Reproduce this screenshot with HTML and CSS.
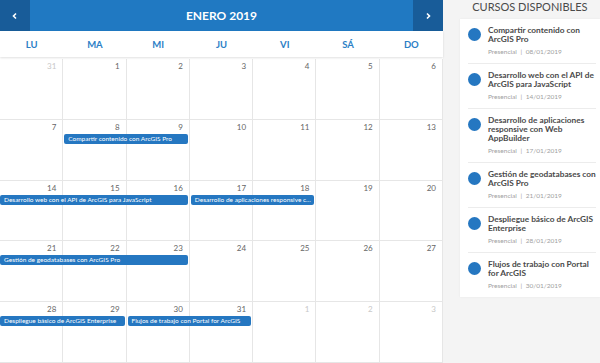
FILE: index.html
```html
<!DOCTYPE html>
<html lang="es">
<head>
    <meta charset="UTF-8">
    <meta name="viewport" content="width=device-width, initial-scale=1.0">
    <title>Calendario de cursos</title>
    <link rel="stylesheet" href="styles.css">
</head>
<body>

<div class="page">
    <div class="calendar">
        <div class="cal-header">
            <button class="nav-btn">
                <svg width="8" height="8" viewBox="0 0 8 8"><path d="M5 1.5 L2.5 4 L5 6.5" fill="none" stroke="#fff" stroke-width="1.6"/></svg>
            </button>
            <h1>ENERO 2019</h1>
            <button class="nav-btn">
                <svg width="8" height="8" viewBox="0 0 8 8"><path d="M3 1.5 L5.5 4 L3 6.5" fill="none" stroke="#fff" stroke-width="1.6"/></svg>
            </button>
        </div>

        <div class="weekdays">
            <div>LU</div><div>MA</div><div>MI</div><div>JU</div><div>VI</div><div>SÁ</div><div>DO</div>
        </div>

        <div class="month">
            <div class="week">
                <div class="days">
                    <div class="day other">31</div><div class="day">1</div><div class="day">2</div><div class="day">3</div><div class="day">4</div><div class="day">5</div><div class="day">6</div>
                </div>
                <div class="events"></div>
            </div>
            <div class="week">
                <div class="days">
                    <div class="day">7</div><div class="day">8</div><div class="day">9</div><div class="day">10</div><div class="day">11</div><div class="day">12</div><div class="day">13</div>
                </div>
                <div class="events">
                    <div class="event from-2 span-2">Compartir contenido con ArcGIS Pro</div>
                </div>
            </div>
            <div class="week">
                <div class="days">
                    <div class="day">14</div><div class="day">15</div><div class="day">16</div><div class="day">17</div><div class="day">18</div><div class="day">19</div><div class="day">20</div>
                </div>
                <div class="events">
                    <div class="event from-1 span-3">Desarrollo web con el API de ArcGIS para JavaScript</div>
                    <div class="event from-4 span-2">Desarrollo de aplicaciones responsive con Web AppBuilder</div>
                </div>
            </div>
            <div class="week">
                <div class="days">
                    <div class="day">21</div><div class="day">22</div><div class="day">23</div><div class="day">24</div><div class="day">25</div><div class="day">26</div><div class="day">27</div>
                </div>
                <div class="events">
                    <div class="event from-1 span-3">Gestión de geodatabases con ArcGIS Pro</div>
                </div>
            </div>
            <div class="week">
                <div class="days">
                    <div class="day">28</div><div class="day">29</div><div class="day">30</div><div class="day">31</div><div class="day other">1</div><div class="day other">2</div><div class="day other">3</div>
                </div>
                <div class="events">
                    <div class="event from-1 span-2">Despliegue básico de ArcGIS Enterprise</div>
                    <div class="event from-3 span-2">Flujos de trabajo con Portal for ArcGIS</div>
                </div>
            </div>
        </div>
    </div>

    <aside class="sidebar">
        <h2>CURSOS DISPONIBLES</h2>
        <ul class="course-list">
            <li class="course">
                <span class="dot"></span>
                <div>
                    <div class="course-title">Compartir contenido con<br>ArcGIS Pro</div>
                    <div class="course-meta">Presencial <span class="sep">|</span> 08/01/2019</div>
                </div>
            </li>
            <li class="course">
                <span class="dot"></span>
                <div>
                    <div class="course-title">Desarrollo web con el API de<br>ArcGIS para JavaScript</div>
                    <div class="course-meta">Presencial <span class="sep">|</span> 14/01/2019</div>
                </div>
            </li>
            <li class="course">
                <span class="dot"></span>
                <div>
                    <div class="course-title">Desarrollo de aplicaciones<br>responsive con Web<br>AppBuilder</div>
                    <div class="course-meta">Presencial <span class="sep">|</span> 17/01/2019</div>
                </div>
            </li>
            <li class="course">
                <span class="dot"></span>
                <div>
                    <div class="course-title">Gestión de geodatabases con<br>ArcGIS Pro</div>
                    <div class="course-meta">Presencial <span class="sep">|</span> 21/01/2019</div>
                </div>
            </li>
            <li class="course">
                <span class="dot"></span>
                <div>
                    <div class="course-title">Despliegue básico de ArcGIS<br>Enterprise</div>
                    <div class="course-meta">Presencial <span class="sep">|</span> 28/01/2019</div>
                </div>
            </li>
            <li class="course">
                <span class="dot"></span>
                <div>
                    <div class="course-title">Flujos de trabajo con Portal<br>for ArcGIS</div>
                    <div class="course-meta">Presencial <span class="sep">|</span> 30/01/2019</div>
                </div>
            </li>
        </ul>
    </aside>
</div>

</body>
</html>
```

FILE: styles.css
```css
body {
    margin: 0;
    font-family: 'Lato', 'Open Sans', sans-serif;
    background-color: #f4f4f4;
    color: #4a4a4a;
}
.page {
    display: flex;
    height: 363px;
    overflow: hidden;
}
.calendar {
    width: 443px;
    flex-shrink: 0;
    display: flex;
    flex-direction: column;
    background: white;
}
.cal-header {
    display: flex;
    height: 31px;
    background-color: #2079c2;
}
.cal-header h1 {
    flex: 1;
    margin: 0;
    text-align: center;
    line-height: 31px;
    font-size: 12px;
    font-weight: 700;
    color: white;
}
.nav-btn {
    width: 30px;
    border: none;
    padding: 0;
    background-color: #185c99;
    display: flex;
    align-items: center;
    justify-content: center;
}
.weekdays {
    display: grid;
    grid-template-columns: repeat(7, 1fr);
    height: 26px;
    box-shadow: 0 1px 2px rgba(0, 0, 0, 0.12);
    position: relative;
    z-index: 1;
}
.weekdays div {
    text-align: center;
    line-height: 27px;
    font-size: 9.5px;
    font-weight: 700;
    color: #2c7fc6;
}
.month {
    flex: 1;
    display: grid;
    grid-template-rows: repeat(5, 1fr);
    margin-top: 2px;
}
.week {
    display: grid;
}
.week > * {
    grid-area: 1 / 1;
}
.days, .events {
    display: grid;
    grid-template-columns: repeat(7, 1fr);
}
.day {
    border-right: 1px solid #e6e6e6;
    border-bottom: 1px solid #e6e6e6;
    text-align: right;
    padding: 2px 6px 0 0;
    font-size: 8px;
    line-height: 10px;
    color: #666666;
}
.day.other {
    color: #c8c8c8;
}
.events {
    align-content: start;
    padding-top: 14px;
}
.event {
    grid-row: 1;
    height: 10px;
    margin: 0 2px 0 1px;
    padding: 0 3px 0 4px;
    background-color: #2577c1;
    border-radius: 2px;
    color: white;
    font-size: 6.5px;
    line-height: 10px;
    white-space: nowrap;
    overflow: hidden;
    text-overflow: ellipsis;
}
.event.from-1 { grid-column-start: 1; margin-left: 0; }
.event.from-2 { grid-column-start: 2; }
.event.from-3 { grid-column-start: 3; }
.event.from-4 { grid-column-start: 4; }
.event.span-2 { grid-column-end: span 2; }
.event.span-3 { grid-column-end: span 3; }

.sidebar {
    flex: 1;
    padding: 0 3px 0 17px;
}
.sidebar h2 {
    margin: 0;
    height: 19px;
    line-height: 14px;
    text-align: center;
    font-size: 11px;
    font-weight: 400;
    color: #4a4a4a;
}
.course-list {
    list-style: none;
    margin: 0;
    padding: 0 4px 0 8px;
    background: white;
    box-shadow: 0 0 2px rgba(0, 0, 0, 0.06);
}
.course {
    display: flex;
    gap: 7px;
    padding: 7px 0 7px;
    border-bottom: 1px solid #ececec;
}
.course:last-child {
    border-bottom: none;
}
.dot {
    width: 13px;
    height: 13px;
    flex-shrink: 0;
    border-radius: 50%;
    background-color: #2577c1;
    margin-top: 2px;
}
.course-title {
    font-size: 8.3px;
    line-height: 9px;
    font-weight: 700;
    white-space: nowrap;
    color: #4a4a4a;
}
.course-meta {
    margin-top: 4px;
    font-size: 6.5px;
    line-height: 8px;
    color: #a0a0a0;
}
.sep {
    margin: 0 2px;
}
```
